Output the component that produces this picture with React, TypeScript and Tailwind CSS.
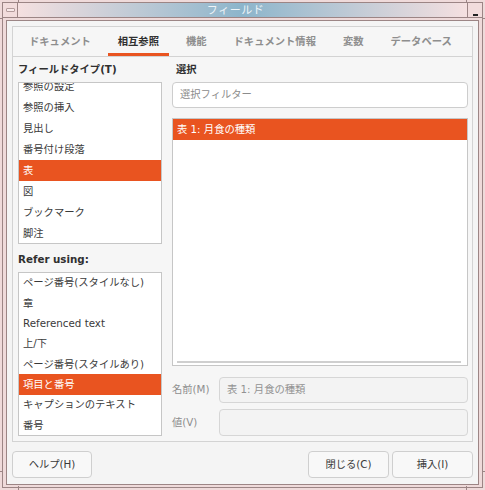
import React from 'react';

const font = { fontFamily: '"DejaVu Sans", "Noto Sans CJK JP", sans-serif' };

export default function App() {
  const tabs = ['ドキュメント', '相互参照', '機能', 'ドキュメント情報', '変数', 'データベース'];
  const types = ['参照の設定', '参照の挿入', '見出し', '番号付け段落', '表', '図', 'ブックマーク', '脚注'];
  const refer = [
    'ページ番号(スタイルなし)',
    '章',
    'Referenced text',
    '上/下',
    'ページ番号(スタイルあり)',
    '項目と番号',
    'キャプションのテキスト',
    '番号'
  ];

  return (
    <div style={font} className="relative w-[485px] h-[490px] bg-[#efdada] p-[2px] text-[10.3px] text-[#3a3a3a]">
      {/* resize notches on the frame */}
      <div className="absolute left-[18px] top-0 w-px h-[3px] bg-[#9c8585]" />
      <div className="absolute left-[466px] top-0 w-px h-[3px] bg-[#9c8585]" />
      <div className="absolute left-[18px] bottom-0 w-px h-[4px] bg-[#9c8585]" />
      <div className="absolute left-[466px] bottom-0 w-px h-[4px] bg-[#9c8585]" />
      <div className="absolute left-0 top-[18px] w-[3px] h-px bg-[#9c8585]" />
      <div className="absolute right-0 top-[18px] w-[3px] h-px bg-[#9c8585]" />
      <div className="absolute left-0 bottom-[18px] w-[3px] h-px bg-[#9c8585]" />
      <div className="absolute right-0 bottom-[18px] w-[3px] h-px bg-[#9c8585]" />

      <div className="h-full border border-[#9c8585] flex flex-col">
        {/* title bar */}
        <div className="h-[15px] flex border-b border-[#9c8585]">
          <div className="w-[15px] border-r border-[#9c8585] bg-[#f2dcdc] flex items-center justify-center">
            <div className="w-[9px] h-[4px] rounded-[1px] border border-[#b49c9c] bg-[#f8eaea]" />
          </div>
          <div className="flex-1 bg-gradient-to-r from-[#f5e0e0] via-[#8cb5cb] to-[#f5e0e0] flex items-center justify-center pr-[14px]">
            <span className="text-[11px] leading-none text-[#eef4f8] tracking-[0.5px]">フィールド</span>
          </div>
          <div className="w-[15px] border-l border-[#9c8585] bg-[#f2dcdc] flex items-end justify-center pb-[1px]">
            <div className="w-[5px] h-[2px] bg-[#222]" />
          </div>
        </div>

        {/* window content */}
        <div className="flex-1 px-[3px] pt-[2px] pb-[2px]">
          <div className="h-full border border-[#9c8585] bg-[#f4f4f4] px-[5px] pt-[5px] pb-[6px] flex flex-col">
            {/* notebook */}
            <div className="h-[416px] border border-[#d3d3d3] bg-[#f6f6f6] flex flex-col">
              <div className="h-[30px] border-b border-[#d3d3d3] flex items-stretch pl-[6px] gap-[7px]">
                {tabs.map((t, i) => (
                  <div
                    key={t}
                    className={
                      i === 1
                        ? 'px-[10px] flex items-center font-bold text-[#303030] border-b-[3px] border-[#e95420] pt-[3px]'
                        : 'px-[10px] flex items-center font-bold text-[#8e8e8e] border-b-[3px] border-transparent pt-[3px]'
                    }
                  >
                    {t}
                  </div>
                ))}
              </div>

              <div className="flex-1 flex pl-[5px] pr-[4px] pt-[2px] gap-[10px]">
                {/* left column */}
                <div className="w-[144px] flex flex-col">
                  <div className="h-[22px] flex items-center font-bold text-[#303030]">フィールドタイプ(T)</div>
                  <div className="mt-[1px] h-[162px] border border-[#c6c6c6] bg-white overflow-hidden">
                    <div className="-mt-[7px]">
                      {types.map((t) => (
                        <div
                          key={t}
                          className={
                            t === '表'
                              ? 'h-[21px] flex items-center pl-[4px] bg-[#e95420] text-white'
                              : 'h-[21px] flex items-center pl-[4px]'
                          }
                        >
                          {t}
                        </div>
                      ))}
                    </div>
                  </div>
                  <div className="h-[28px] pt-[4px] flex items-center font-bold text-[#303030]">Refer using:</div>
                  <div className="h-[164px] border border-[#c6c6c6] bg-white overflow-hidden">
                    {refer.map((t) => (
                      <div
                        key={t}
                        className={
                          t === '項目と番号'
                            ? 'h-[20.3px] flex items-center pl-[4px] bg-[#e95420] text-white'
                            : 'h-[20.3px] flex items-center pl-[4px]'
                        }
                      >
                        {t}
                      </div>
                    ))}
                  </div>
                </div>

                {/* right column */}
                <div className="flex-1 flex flex-col">
                  <div className="h-[22px] flex items-center pl-[4px] font-bold text-[#303030]">選択</div>
                  <div className="mt-[1px] h-[26px] rounded-[4px] border border-[#cdcdcd] bg-white flex items-center pl-[7px] text-[#8c8c8c]">
                    選択フィルター
                  </div>
                  <div className="relative mt-[10px] h-[248px] border border-[#c6c6c6] bg-white">
                    <div className="h-[21px] flex items-center pl-[4px] bg-[#e95420] text-white">表 1: 月食の種類</div>
                    <div className="absolute left-[4px] right-[6px] bottom-[2px] h-[2px] bg-[#cfcfcf]" />
                  </div>
                  <div className="mt-[11px] h-[26px] flex items-center">
                    <div className="w-[47px] text-[#8e8e8e]">名前(M)</div>
                    <div className="flex-1 h-full rounded-[4px] border border-[#d6d6d6] bg-[#f3f3f3] flex items-center pl-[7px] text-[#929292]">
                      表 1: 月食の種類
                    </div>
                  </div>
                  <div className="mt-[6px] h-[27px] flex items-center">
                    <div className="w-[47px] text-[#8e8e8e]">値(V)</div>
                    <div className="flex-1 h-full rounded-[4px] border border-[#d6d6d6] bg-[#f3f3f3]" />
                  </div>
                </div>
              </div>
            </div>

            {/* buttons */}
            <div className="mt-[9px] h-[27px] flex">
              <button className="w-[80px] h-full rounded-[4px] border border-[#cfcfcf] bg-[#f8f8f8] text-[#3a3a3a]">ヘルプ(H)</button>
              <div className="flex-1" />
              <button className="w-[81px] h-full rounded-[4px] border border-[#cfcfcf] bg-[#f8f8f8] text-[#3a3a3a]">閉じる(C)</button>
              <button className="ml-[3px] w-[81px] h-full rounded-[4px] border border-[#cfcfcf] bg-[#f8f8f8] text-[#3a3a3a]">挿入(I)</button>
            </div>
          </div>
        </div>
      </div>
    </div>
  );
}
